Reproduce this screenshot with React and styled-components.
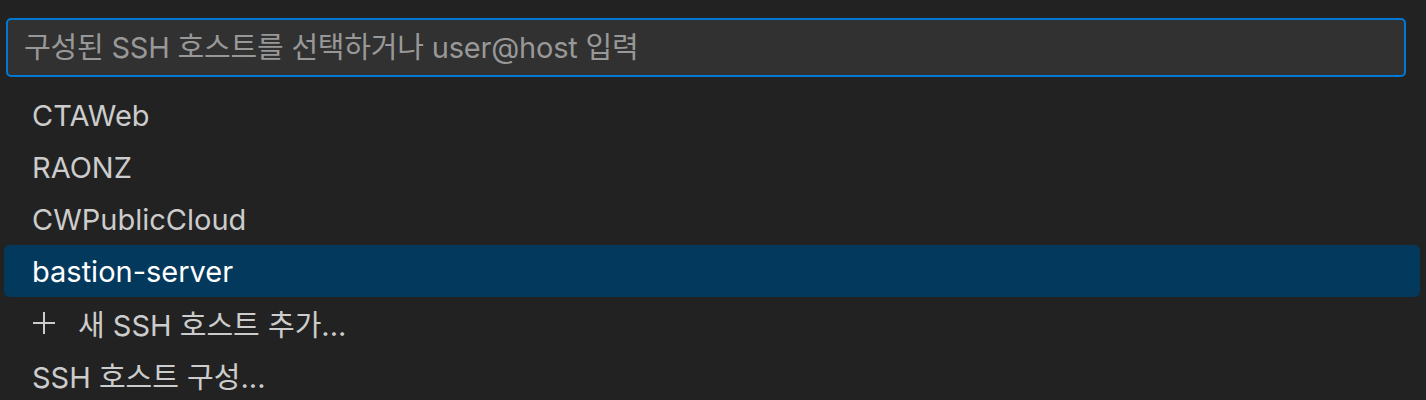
import React from 'react'
import styled, { createGlobalStyle } from 'styled-components'

const GlobalStyle = createGlobalStyle`
  html, body {
    margin: 0;
    padding: 0;
    background: #222222;
  }
  body {
    font-family: "Inter", "Noto Sans CJK KR", sans-serif;
    -webkit-font-smoothing: antialiased;
  }
`

const Panel = styled.div`
  width: 1426px;
  height: 400px;
  box-sizing: border-box;
  padding: 18px 6px 0 4px;
  background: #222222;
  overflow: hidden;
`

const SearchBox = styled.input`
  display: block;
  width: 1400px;
  height: 59px;
  margin: 0 0 12px 2px;
  box-sizing: border-box;
  padding: 0 16px;
  background: #313131;
  border: 2px solid #0078d4;
  border-radius: 5px;
  color: #cccccc;
  font-family: "Inter", "Noto Sans CJK KR", sans-serif;
  font-size: 29px;
  letter-spacing: -0.2px;
  outline: none;

  &::placeholder {
    color: #989898;
  }
`

const List = styled.ul`
  list-style: none;
  margin: 0;
  padding: 0;
`

const Item = styled.li`
  display: flex;
  align-items: center;
  gap: 22px;
  height: 52px;
  width: 1416px;
  box-sizing: border-box;
  padding-left: 28px;
  border-radius: 6px;
  font-size: 29px;
  color: ${(p) => (p.active ? '#ffffff' : '#cccccc')};
  background: ${(p) => (p.active ? '#04395e' : 'transparent')};
  white-space: nowrap;
`

const PlusIcon = () => (
  <svg width="24" height="24" viewBox="0 0 24 24" fill="none" stroke="#cccccc" strokeWidth="2">
    <path d="M12 1v22M1 12h22" />
  </svg>
)

const hosts = ['CTAWeb', 'RAONZ', 'CWPublicCloud', 'bastion-server']

const App = () => {
  return (
    <>
      <GlobalStyle />
      <Panel>
        <SearchBox placeholder='구성된 SSH 호스트를 선택하거나 user@host 입력' />
        <List>
          {hosts.map((h) => (
            <Item key={h} active={h === 'bastion-server'}>{h}</Item>
          ))}
          <Item>
            <PlusIcon />
            새 SSH 호스트 추가...
          </Item>
          <Item>SSH 호스트 구성...</Item>
        </List>
      </Panel>
    </>
  )
}

export default App
